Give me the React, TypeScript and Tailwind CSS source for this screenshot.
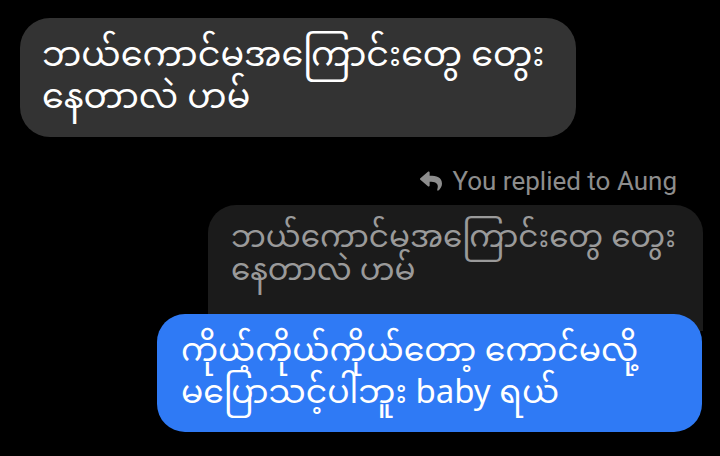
import React from "react";
import { FaReply } from "react-icons/fa";

export default function App() {
  return (
    <div className="w-[720px] h-[456px] bg-black overflow-hidden flex flex-col font-['Noto_Sans_Myanmar','Noto_Sans',sans-serif]">
      <div className="ml-[20px] mt-[18px] w-[556px] h-[119px] bg-[#333333] rounded-[30px] pl-[22px] pt-[19px] text-white text-[35px] leading-[42px] whitespace-nowrap">
        ဘယ်ကောင်မအကြောင်းတွေ တွေး
        <br />
        နေတာလဲ ဟမ်
      </div>
      <div className="self-end mr-[43px] mt-[30px] flex items-center gap-[10px] text-[#8d8d8d] text-[26px] leading-[28px] font-['Roboto',sans-serif]">
        <FaReply className="w-[22px] h-[22px]" />
        <span>You replied to Aung</span>
      </div>
      <div className="self-end mr-[17px] mt-[10px] w-[495px] h-[126px] bg-[#1b1b1b] rounded-t-[28px] pl-[23px] pt-[19px] text-[#9a9a9a] text-[31px] leading-[33px] whitespace-nowrap">
        ဘယ်ကောင်မအကြောင်းတွေ တွေး
        <br />
        နေတာလဲ ဟမ်
      </div>
      <div className="self-end mr-[18px] -mt-[17px] w-[545px] h-[118px] bg-[#2f7af5] rounded-[28px] pl-[24px] pt-[18px] text-white text-[33px] leading-[42px] whitespace-nowrap">
        ကိုယ့်ကိုယ်ကိုယ်တော့ ကောင်မလို့
        <br />
        မပြောသင့်ပါဘူး baby ရယ်
      </div>
    </div>
  );
}
